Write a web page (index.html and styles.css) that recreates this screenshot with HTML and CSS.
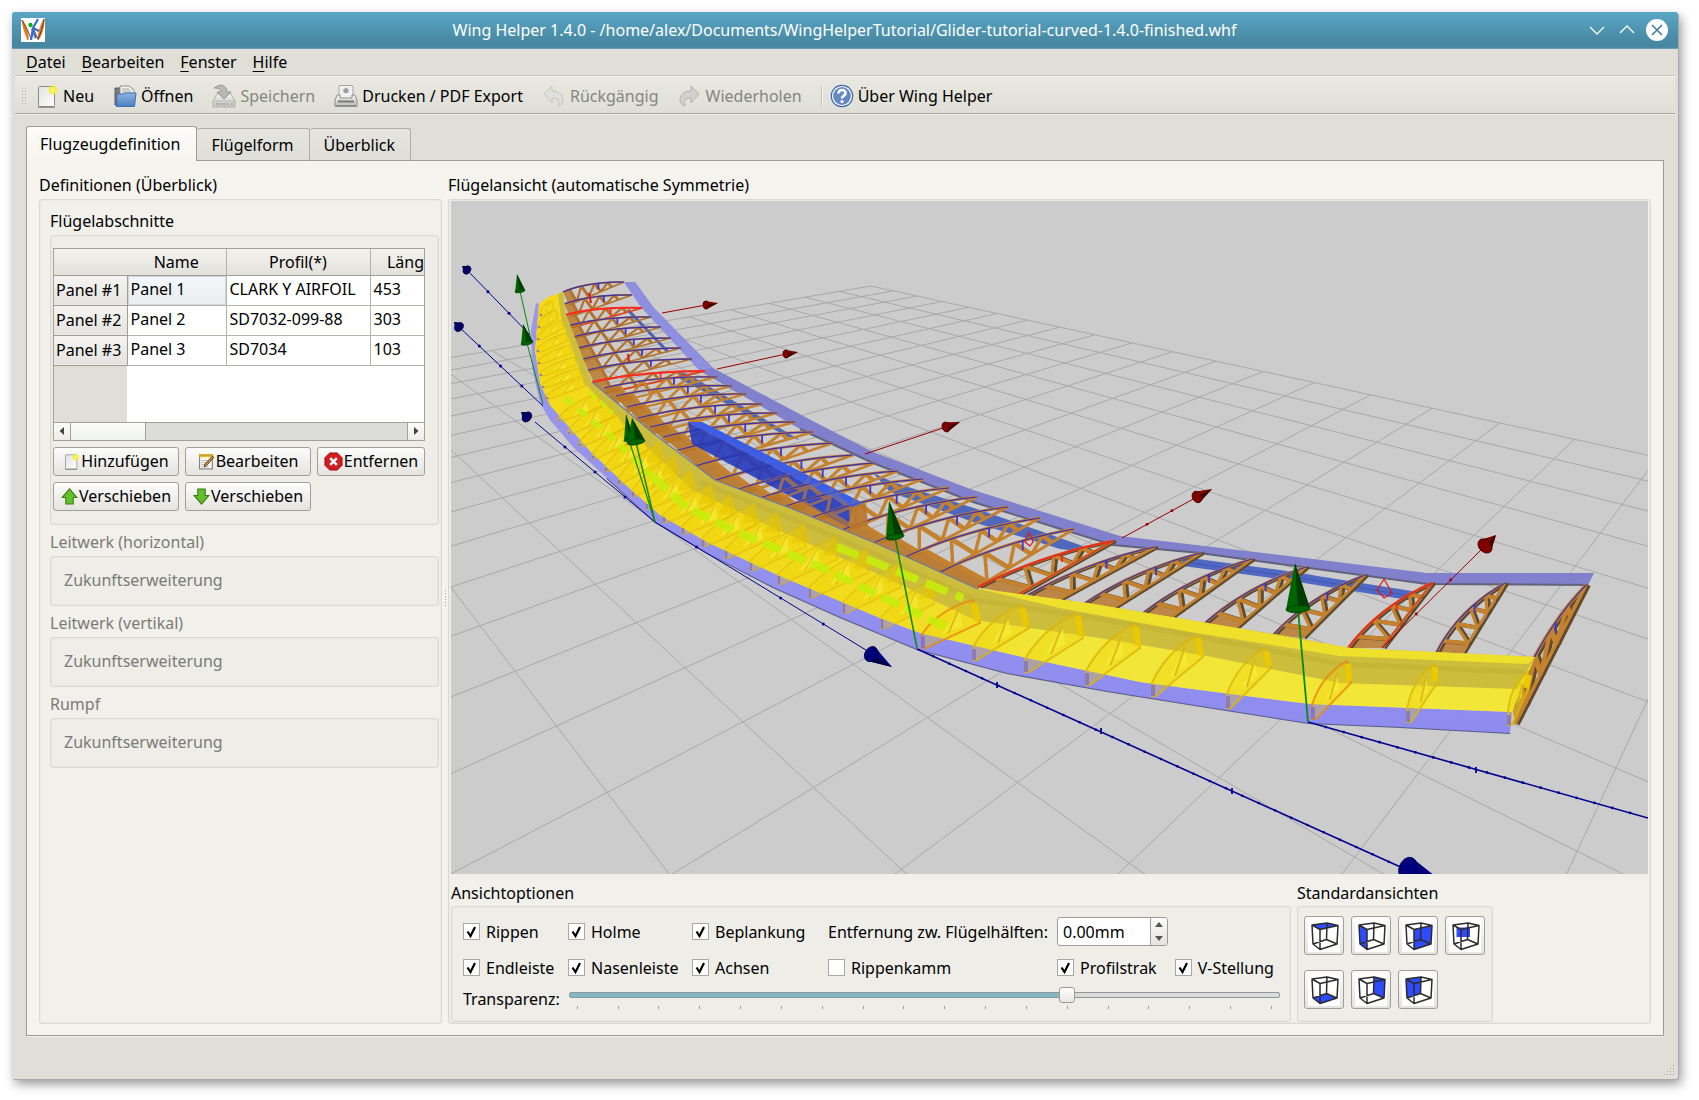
FILE: index.html
```html
<!DOCTYPE html>
<html lang="de">
<head>
<meta charset="utf-8">
<title>Wing Helper 1.4.0</title>
<link rel="stylesheet" href="styles.css">
</head>
<body>
<svg class="defs" aria-hidden="true">
  <defs>
    <linearGradient id="paper" x1="0" y1="0" x2="1" y2="1"><stop offset="0" stop-color="#e2e2e0"/><stop offset="1" stop-color="#fdfdfd"/></linearGradient>
    <linearGradient id="folder" x1="0" y1="0" x2="0" y2="1"><stop offset="0" stop-color="#8fb5e0"/><stop offset="1" stop-color="#4a80c4"/></linearGradient>
    <linearGradient id="metal" x1="0" y1="0" x2="0" y2="1"><stop offset="0" stop-color="#f6f6f5"/><stop offset="1" stop-color="#b9bab7"/></linearGradient>
    <radialGradient id="glow"><stop offset="0" stop-color="#fffb9a"/><stop offset=".5" stop-color="#f6ee2c"/><stop offset="1" stop-color="#f6ee2c" stop-opacity="0"/></radialGradient>
    <symbol id="i-new" viewBox="0 0 24 24"><rect x="3.500" y="2.500" width="16" height="20" rx="1" fill="url(#paper)" stroke="#8a8b87"/><path d="M3 23.200h17" stroke="#777" stroke-width="1"/><circle cx="18" cy="6" r="5.500" fill="url(#glow)"/></symbol>
    <symbol id="i-open" viewBox="0 0 24 24"><path d="M2 4h5l1 2v15H2z" fill="#77797a" stroke="#5c5e60"/><path d="M7 2h9l5 4v8H7z" fill="#f0f0ee" stroke="#8f918e"/><path d="M9 5h7M9 7h9M9 9h9" stroke="#aaa"/><path d="M4 10h7l1-1h11l-1.500 13.500h-18z" fill="url(#folder)" stroke="#3f6fae"/></symbol>
    <symbol id="i-save" viewBox="0 0 24 24"><path d="M5 10h14l4 7v6H1v-6z" fill="url(#metal)" stroke="#9c9d9a"/><path d="M1 17h22" stroke="#aaa"/><path d="M4 20h13M19 20h2" stroke="#888" stroke-width="2" stroke-dasharray="1.500 1"/><path d="M2 4C8-1 15 1 15 8h4l-7 7-7-7h4C9 5 6 4 2 4z" fill="#a5a7a4" stroke="#777976"/></symbol>
    <symbol id="i-print" viewBox="0 0 24 24"><rect x="5" y="1.500" width="14" height="14" rx="1" fill="#f0f0ee" stroke="#a3a5a2"/><path d="M12 3.500l3 2.500-1 3h-4L9 6z" fill="#9c9fa0"/><path d="M3 11h3v3h12v-3h3l2 5v6.500H1V16z" fill="url(#metal)" stroke="#8d8f8c"/><path d="M4 16.500h16v2H4z" fill="#777976"/><path d="M2 21.500h20" stroke="#8d8f8c"/></symbol>
    <symbol id="i-undo" viewBox="0 0 24 24"><path d="M10 2v5c8 0 11 5 11 9 0 3-2 5-5 6 2-5 0-8-6-8v5L2 10z" fill="#dddedb" stroke="#b9bab7"/></symbol>
    <symbol id="i-redo" viewBox="0 0 24 24"><path d="M13 2l8 8-8 9v-5c-5 0-8 3-6 8-3-1-5-3-5-6 0-4 3-9 11-9z" fill="#c9cac7" stroke="#9c9d9a"/></symbol>
    <symbol id="i-about" viewBox="0 0 24 24"><circle cx="12" cy="12" r="11.300" fill="#3f66a8"/><circle cx="12" cy="12" r="9.500" fill="#6489c2" stroke="#fff" stroke-width="1.200"/><path d="M8.500 9.500c0-5 7.500-4.500 7 0-.3 2.500-3.500 2-3.500 5" fill="none" stroke="#fff" stroke-width="2.600"/><circle cx="12" cy="17.500" r="1.600" fill="#fff"/></symbol>
    <symbol id="i-edit" viewBox="0 0 16 16"><rect x="1.500" y="2" width="12" height="13" fill="#fafaf6" stroke="#777"/><path d="M1 2.500h13" stroke="#d8a800" stroke-width="3" stroke-dasharray="1.500 .5"/><path d="M3 7h7M3 9h6M3 11h5M3 13h7" stroke="#aaa" stroke-width=".8"/><path d="M15 4l-7 8-2 1 .5-2.500 7-7.500z" fill="#c98a3c" stroke="#4e3510" stroke-width=".8"/></symbol>
    <symbol id="i-remove" viewBox="0 0 20 20"><path d="M6 1h8l5 5v8l-5 5H6l-5-5V6z" fill="#d01c22" stroke="#a00a10"/><path d="M6.500 6.500l7 7M13.500 6.500l-7 7" stroke="#fff" stroke-width="2.600"/></symbol>
    <symbol id="i-up" viewBox="0 0 16 16"><path d="M8 .8L15 9h-3.500v6h-7V9H1z" fill="#63bf2b" stroke="#3a7a10"/></symbol>
    <symbol id="i-down" viewBox="0 0 16 16"><path d="M8 15.200L1 7h3.500V1h7v6H15z" fill="#63bf2b" stroke="#3a7a10"/></symbol>
    <symbol id="cube" viewBox="0 0 32 32"><path d="M4 5L19 3L30 5.500L12 9.500ZM4 5L5 24L12 29.500L29 24L30 5.500M12 9.500V29.500M19 3L18.500 19.500M5 24L18.500 19.500L29 24" fill="none" stroke="#2b2b2b" stroke-width="1.500" stroke-linejoin="round"/></symbol>
  </defs>
</svg>

<div class="window">
  <header class="titlebar">
    <svg class="app-logo" viewBox="0 0 24 24"><path fill="#fff" d="M0 0h24v24H0z"/><path d="M1 2c1 7 3 14 6 20 1-7-2-14-6-20zM23 1c0 8-2 16-6 21 0-5 2-14 6-21z" fill="#e8781c" stroke="#e8781c"/><path d="M1 2c4 6 7 13 9 19l3-9 4 9C20 15 22 8 23 1" fill="none" stroke="#3b3530" stroke-width=".8"/><path d="M17 1l-5 9 6 3M12 10l-2 12M11 11l4 9" fill="none" stroke="#3a6cc8" stroke-width="2.200"/><circle cx="9.500" cy="7" r="2.200" fill="#10b010"/></svg>
    <h1>Wing Helper 1.4.0 - /home/alex/Documents/WingHelperTutorial/Glider-tutorial-curved-1.4.0-finished.whf</h1>
    <div class="win-buttons">
      <button aria-label="Minimieren"><svg viewBox="0 0 22 22"><path d="M4 8l7 7 7-7"/></svg></button>
      <button aria-label="Maximieren"><svg viewBox="0 0 22 22"><path d="M4 14l7-7 7 7"/></svg></button>
      <button aria-label="Schließen"><svg viewBox="0 0 22 22"><circle cx="11" cy="11" r="11"/><path class="cross" d="M6 6l10 10M16 6L6 16"/></svg></button>
    </div>
  </header>

  <nav class="menubar">
    <button><u>D</u>atei</button><button><u>B</u>earbeiten</button><button><u>F</u>enster</button><button><u>H</u>ilfe</button>
  </nav>

  <div class="toolbar">
    <span class="grip"></span>
    <button><svg><use href="#i-new"/></svg>Neu</button>
    <button><svg><use href="#i-open"/></svg>Öffnen</button>
    <button disabled><svg><use href="#i-save"/></svg>Speichern</button>
    <button><svg><use href="#i-print"/></svg>Drucken / PDF Export</button>
    <button disabled><svg><use href="#i-undo"/></svg>Rückgängig</button>
    <button disabled><svg><use href="#i-redo"/></svg>Wiederholen</button>
    <span class="separator"></span>
    <button><svg><use href="#i-about"/></svg>Über Wing Helper</button>
  </div>

  <main class="content">
    <div class="tabs" role="tablist">
      <button role="tab" class="active">Flugzeugdefinition</button>
      <button role="tab">Flügelform</button>
      <button role="tab">Überblick</button>
    </div>
    <div class="page">
      <section class="column sidebar">
        <h2>Definitionen (Überblick)</h2>
        <div class="frame side-frame">
          <h3>Flügelabschnitte</h3>
          <div class="frame sections">
            <div class="grid">
              <table>
                <colgroup><col class="c-head"><col class="c-name"><col class="c-profile"><col class="c-length"></colgroup>
                <thead><tr><td></td><th>Name</th><th>Profil(*)</th><th class="cut">Läng</th></tr></thead>
                <tbody>
                  <tr><th>Panel #1</th><td class="current">Panel 1</td><td>CLARK Y AIRFOIL</td><td>453</td></tr>
                  <tr><th>Panel #2</th><td>Panel 2</td><td>SD7032-099-88</td><td>303</td></tr>
                  <tr><th>Panel #3</th><td>Panel 3</td><td>SD7034</td><td>103</td></tr>
                </tbody>
              </table>
              <div class="grid-rest"></div>
              <div class="scrollbar">
                <button aria-label="Nach links"><svg viewBox="0 0 8 8"><path d="M6 0v8L1.500 4z"/></svg></button>
                <span class="thumb"></span>
                <button class="end" aria-label="Nach rechts"><svg viewBox="0 0 8 8"><path d="M2 0v8l4.500-4z"/></svg></button>
              </div>
            </div>
            <div class="actions">
              <button><svg><use href="#i-new"/></svg>Hinzufügen</button>
              <button><svg><use href="#i-edit"/></svg>Bearbeiten</button>
              <button><svg class="big"><use href="#i-remove"/></svg>Entfernen</button>
              <button><svg><use href="#i-up"/></svg>Verschieben</button>
              <button><svg><use href="#i-down"/></svg>Verschieben</button>
            </div>
          </div>
          <h3 class="off">Leitwerk (horizontal)</h3>
          <div class="frame future">Zukunftserweiterung</div>
          <h3 class="off">Leitwerk (vertikal)</h3>
          <div class="frame future">Zukunftserweiterung</div>
          <h3 class="off">Rumpf</h3>
          <div class="frame future">Zukunftserweiterung</div>
        </div>
      </section>
      <div class="splitter"><span></span></div>
      <section class="column viewer">
        <h2>Flügelansicht (automatische Symmetrie)</h2>
        <div class="frame view-frame">
          <svg id="scene" class="scene" viewBox="451 201 1197 673" preserveAspectRatio="xMidYMid slice" role="img" aria-label="3D-Ansicht des Flügels"></svg>
          <div class="below">
            <div class="options">
              <h3>Ansichtoptionen</h3>
              <div class="frame options-frame">
                <div class="checks">
                  <label><input type="checkbox" checked>Rippen</label>
                  <label><input type="checkbox" checked>Holme</label>
                  <label><input type="checkbox" checked>Beplankung</label>
                  <label for="distance">Entfernung zw. Flügelhälften:</label>
                  <div class="spin"><input id="distance" type="text" value="0.00mm"><div class="spin-buttons"><button aria-label="Mehr"><svg viewBox="0 0 8 5"><path d="M4 0l4 5H0z"/></svg></button><button aria-label="Weniger"><svg viewBox="0 0 8 5"><path d="M0 0h8L4 5z"/></svg></button></div></div>
                  <label class="row-start"><input type="checkbox" checked>Endleiste</label>
                  <label><input type="checkbox" checked>Nasenleiste</label>
                  <label><input type="checkbox" checked>Achsen</label>
                  <label><input type="checkbox">Rippenkamm</label>
                  <label><input type="checkbox" checked>Profilstrak</label>
                  <label><input type="checkbox" checked>V-Stellung</label>
                </div>
                <div class="slider-row">
                  <label for="alpha">Transparenz:</label>
                  <div class="slider">
                    <input id="alpha" type="range" min="0" max="170" value="120">
                    <div class="ticks"><i></i><i></i><i></i><i></i><i></i><i></i><i></i><i></i><i></i><i></i><i></i><i></i><i></i><i></i><i></i><i></i><i></i><i></i></div>
                  </div>
                </div>
              </div>
            </div>
            <div class="standard">
              <h3>Standardansichten</h3>
              <div class="frame standard-frame">
                <button aria-label="Oben"><svg viewBox="0 0 32 32"><path d="M4 5L19 3L30 5.500L12 9.500Z"/><use href="#cube"/></svg></button>
                <button aria-label="Links"><svg viewBox="0 0 32 32"><path d="M4 5L12 9.500V29.500L5 24Z"/><use href="#cube"/></svg></button>
                <button aria-label="Vorne"><svg viewBox="0 0 32 32"><path d="M12 9.500L30 5.500L29 24L12 29.500Z"/><use href="#cube"/></svg></button>
                <button aria-label="Perspektive"><svg viewBox="0 0 32 32"><path d="M7.500 7.500H21V17H7.500Z"/><use href="#cube"/></svg></button>
                <button aria-label="Unten"><svg viewBox="0 0 32 32"><path d="M5 24L18.500 19.500L29 24L12 29.500Z"/><use href="#cube"/></svg></button>
                <button aria-label="Rechts"><svg viewBox="0 0 32 32"><path d="M19 3L30 5.500L29 24L18.500 19.500Z"/><use href="#cube"/></svg></button>
                <button aria-label="Hinten"><svg viewBox="0 0 32 32"><path d="M4 5L19 3L18.500 19.500L5 24Z"/><use href="#cube"/></svg></button>
              </div>
            </div>
          </div>
        </div>
      </section>
    </div>
  </main>
  <footer class="statusbar"><span class="sizegrip"></span></footer>
</div>
<script src="scene.js"></script>
</body>
</html>
```
FILE: styles.css
```css
* { box-sizing: border-box; }

body {
  margin: 0;
  min-height: 100vh;
  padding: 12px 21px 21px 12px;
  display: flex;
  background: #fff;
  color: #000;
  font: 16px/22px "Noto Sans", sans-serif;
}

.defs { position: absolute; width: 0; height: 0; }

h1, h2, h3 { margin: 0; font-size: 16px; font-weight: 400; line-height: 22px; }
button, input { font: inherit; color: inherit; }
button { padding: 0; border: 0; background: none; }
svg { display: block; }

.window {
  flex: 1;
  min-width: 0;
  display: flex;
  flex-direction: column;
  background: #dfdfd8;
  border-radius: 3px 3px 2px 2px;
  box-shadow: 1px 1px 0 #a9a9a9, 3px 5px 11px rgba(0, 0, 0, .42);
}

/* title bar */
.titlebar {
  display: flex;
  align-items: center;
  height: 37px;
  padding: 0 10px 0 9px;
  border-radius: 3px 3px 0 0;
  border-bottom: 1px solid #6c9fb4;
  background: linear-gradient(#59a7c5, #4787a1 85%);
  color: #fff;
}
.app-logo { width: 24px; height: 24px; }
.titlebar h1 { flex: 1; padding-left: 58px; text-align: center; }
.win-buttons { display: flex; gap: 8px; }
.win-buttons svg { width: 22px; height: 22px; fill: none; stroke: #fff; stroke-width: 1.300; }
.win-buttons circle { fill: #fff; stroke: none; }
.win-buttons .cross { stroke: #3f7f9b; stroke-width: 1.600; }

/* menus and tools */
.menubar { display: flex; gap: 16px; height: 26px; padding: 2px 14px; }
.menubar u { text-underline-offset: 3px; }
.toolbar {
  display: flex;
  align-items: center;
  gap: 19px;
  height: 39px;
  margin: 0 3px;
  border-top: 1px solid #c4c4bf;
  border-bottom: 1px solid #a6a69f;
  background: linear-gradient(#e9e8e1, #dfdfd8);
  box-shadow: inset 0 1px #f2f2ee, 0 1px #eeeeea;
  padding: 2px 0 0 6px;
}
.toolbar button { display: flex; align-items: center; gap: 4px; white-space: nowrap; }
.toolbar button svg { width: 24px; height: 24px; }
.toolbar button:disabled { color: #868680; }
.toolbar button:disabled svg { opacity: .7; }
.grip { width: 5px; height: 18px; margin-right: -10px; background: radial-gradient(circle, #aaa 1px, transparent 1px) 0 0 / 3px 3px; }
.separator { width: 2px; height: 20px; margin-right: -12px; background: #c4c4bf; border-right: 1px solid #f4f4f0; }

/* tabs */
.content { flex: 1; display: flex; flex-direction: column; padding: 12px 14px 0; }
.tabs { position: relative; z-index: 1; display: flex; align-items: flex-end; height: 35px; }
.tabs button {
  height: 33px;
  padding: 0 15px 0 14px;
  border: 1px solid #aeaea8;
  border-left: 0;
  border-bottom-color: #9c9c96;
  border-radius: 3px 3px 0 0;
  background: linear-gradient(#e5e4df, #dfded9);
}
.tabs .active {
  height: 35px;
  padding: 0 16px 0 13px;
  border: 1px solid #9c9c96;
  border-bottom: 0;
  background: linear-gradient(#fdfcf9, #f5f4ef);
}
.page {
  flex: 1;
  display: flex;
  margin-top: -1px;
  padding: 13px 12px 11px;
  border: 1px solid #9c9c96;
  background: #f4f3ee;
  box-shadow: 0 1px #eeeeea;
}
.column { display: flex; flex-direction: column; }
.column h2 { margin-bottom: 3px; }

.frame {
  border: 1px solid #d9d8d3;
  border-radius: 3px;
  background: #f1f0eb;
  box-shadow: inset 0 0 2px #dedcd6;
}
.frame .frame { background: #eeede8; }

/* left column */
.sidebar { width: 403px; flex: none; }
.side-frame { flex: 1; padding: 10px 2px 10px 10px; }
.side-frame h3 { margin-bottom: 3px; }
.side-frame h3.off { margin: 6px 0 3px; }
.off, .future { color: #7b7b76; }
.frame.future { height: 50px; padding: 12px 13px; }
.sections { padding: 12px 13px 13px 2px; }

.grid { border: 1px solid #a2a29c; background: #fff; overflow: hidden; }
.grid table { width: 100%; table-layout: fixed; border-collapse: collapse; }
.c-head { width: 73px; }
.c-name { width: 99px; }
.c-profile { width: 144px; }
.grid th, .grid td {
  height: 30px;
  padding: 0 3px 2px;
  border: 1px solid #b4b4ae;
  border-left: 0;
  border-top: 0;
  font-weight: 400;
  text-align: left;
  white-space: nowrap;
}
.grid th { padding: 0 2px; background: linear-gradient(#f5f4f2, #e4e3df); border-color: #9f9f9a; }
.grid thead th, .grid thead td { height: 26px; text-align: center; background: linear-gradient(#f3f2ee, #e2e1dc); border-color: #9f9f9a #b4b4ae; }
.grid thead td { border-right: 0; }
.grid thead .cut { padding: 0; text-align: right; }
.grid tr > :last-child { border-right: 0; }
.grid .current { background: linear-gradient(#f5f8fb, #e9edf0); box-shadow: inset 0 0 0 1px #cfd6da; }
.grid-rest { height: 56px; background: linear-gradient(to right, #dfdfd8 73px, #fff 73px); }
.scrollbar { display: flex; height: 18px; border-top: 1px solid #a2a29c; background: #dcdcd8; }
.scrollbar button { display: flex; align-items: center; justify-content: center; width: 17px; border-right: 1px solid #a2a29c; background: linear-gradient(#fbfbf9, #eeede9); }
.scrollbar .end { margin-left: auto; border-right: 0; border-left: 1px solid #a2a29c; }
.scrollbar svg { width: 8px; height: 8px; fill: #444; }
.thumb { width: 75px; border-right: 1px solid #a2a29c; background: linear-gradient(#fcfdfb, #f0f2ee); }

.actions { display: grid; grid-template-columns: 126px 126px 1fr; gap: 6px; margin-top: 6px; }
.actions button, .standard button {
  display: flex;
  align-items: center;
  justify-content: center;
  border: 1px solid #a09f99;
  border-radius: 3px;
  background: linear-gradient(#fcfcfb, #e4e3df);
}
.actions button { height: 29px; }
.actions svg { width: 17px; height: 17px; margin-right: 1px; }
.actions .big { width: 19px; height: 19px; }

/* right column */
.splitter { width: 6px; display: flex; align-items: center; }
.splitter span { width: 1px; height: 18px; margin: 0 auto; background: repeating-linear-gradient(#aaa 0 1px, transparent 1px 3px); }
.viewer { flex: 1; min-width: 0; }
.view-frame { flex: 1; display: flex; flex-direction: column; padding: 1px 2px; }
.scene { flex: 1 1 300px; width: 100%; min-height: 300px; background: #ccc; }
.below { display: flex; gap: 6px; }
.options { flex: 0 1 840px; }
.below h3 { margin: 8px 0 2px; }
.options-frame, .standard-frame { height: 116px; }
.options-frame { padding: 10px 10px 0 11px; }
.checks {
  display: grid;
  grid-template-columns: 105px 124px 136px 229px auto auto;
  grid-auto-rows: 29px;
  row-gap: 7px;
  align-items: center;
  justify-content: start;
}
.row-start { grid-column-start: 1; }
.checks label { display: flex; align-items: center; gap: 6px; white-space: nowrap; }
.checks label:last-child { margin-left: 18px; }
input[type="checkbox"] {
  appearance: none;
  flex: none;
  width: 17px;
  height: 17px;
  margin: 0;
  border: 1px solid #a9a9a3;
  background: #fff;
}
input[type="checkbox"]:checked {
  background: #fff url("data:image/svg+xml,%3Csvg xmlns='http://www.w3.org/2000/svg' viewBox='0 0 15 15'%3E%3Cpath d='M3.500 7.500L6.500 12L11 3' fill='none' stroke='%23000' stroke-width='2.200'/%3E%3C/svg%3E") center / 15px 15px;
}
.spin { display: flex; width: 111px; height: 29px; border: 1px solid #9c9c96; border-radius: 3px; background: #fff; overflow: hidden; grid-column: 5 / 7; }
.spin input { flex: 1; min-width: 0; padding: 0 5px; border: 0; background: none; }
.spin-buttons { display: flex; flex-direction: column; width: 17px; border-left: 1px solid #9c9c96; background: linear-gradient(#fcfcfb, #e4e3df); }
.spin-buttons button { flex: 1; display: flex; align-items: center; justify-content: center; }
.spin-buttons svg { width: 8px; height: 5px; fill: #555; }

.slider-row { display: flex; gap: 9px; margin-top: 6px; }
.slider { flex: 1; }
.slider input {
  appearance: none;
  display: block;
  width: 100%;
  height: 6px;
  margin: 4px 0 8px;
  border: 1px solid #8a9a9c;
  border-radius: 2px;
  background: linear-gradient(to right, #86b7c4 70%, #dcdbd6 70%);
}
.slider input::-webkit-slider-thumb {
  appearance: none;
  width: 16px;
  height: 16px;
  border: 1px solid #9c9c96;
  border-radius: 3px;
  background: linear-gradient(#fff, #e8e7e3);
}
.ticks { display: flex; justify-content: space-between; padding: 0 8px; }
.ticks i { width: 1px; height: 3px; background: #9b9b95; }

.standard-frame { display: grid; grid-template-columns: repeat(4, 40px); grid-auto-rows: 39px; gap: 15px 7px; padding: 9px 7px 0 6px; }
.standard-frame svg { width: 32px; height: 32px; background: #fff; fill: #2f4bff; }

.statusbar { display: flex; justify-content: flex-end; align-items: flex-end; height: 43px; padding: 4px; }
.sizegrip { width: 11px; height: 11px; background: radial-gradient(circle, #a5a59f 1px, transparent 1px) 0 0 / 3px 3px; clip-path: polygon(100% 0, 100% 100%, 0 100%); }
```
FILE: scene.js
```js
// Builds the 3D preview of the wing as SVG shapes.
(function () {
  var out = [];
  var r = function (n) { return Math.round(n * 10) / 10; };
  function pts(a) { return a.map(function (p) { return r(p[0]) + ',' + r(p[1]); }).join(' '); }
  function poly(a, fill, extra) { out.push('<polygon points="' + pts(a) + '" fill="' + fill + '" ' + (extra || '') + '/>'); }
  function line(a, color, w, extra) { out.push('<polyline points="' + pts(a) + '" fill="none" stroke="' + color + '" stroke-width="' + w + '" ' + (extra || '') + '/>'); }
  function mix(a, b, t) { return [a[0] + (b[0] - a[0]) * t, a[1] + (b[1] - a[1]) * t]; }

  // ground grid, projected with a fixed camera
  function project(i, j) {
    var w = 1 - 0.02794 * i - 0.02942 * j;
    return [(870.9 - 2.6 * i - 56.6 * j) / w, (286 - 3.257 * i - 3.14 * j) / w];
  }
  for (var k = 0; k <= 30; k++) {
    line([project(k, 0), project(k, Math.min(32, (0.97 - 0.02794 * k) / 0.02942))], '#a9a9a9', 1);
    line([project(0, k), project(Math.min(32, (0.97 - 0.02942 * k) / 0.02794), k)], '#a9a9a9', 1);
  }

  // spanwise curves, far tip to near tip
  var noseLow = [[536,303],[531,330],[532,367],[540,403],[550,420],[573,447],[607,478],[655,522],[707,553],[773,587],[840,617],[917,649],[1007,673],[1107,691],[1207,707],[1308,723],[1400,727],[1510,733]];
  var noseTop = [[539,304],[535,350],[540,383],[550,405],[590,451],[627,486],[660,515],[707,542],[773,573],[880,618],[920,633],[1027,658],[1140,682],[1200,690],[1310,704],[1512,712]];
  var sheetRear = [[563,292],[566,315],[592,382],[653,433],[715,480],[790,508],[880,545],[978,589],[1087,603],[1207,623],[1280,635],[1350,648],[1535,657]];
  var bandLow = [[558,294],[561,317],[585,384],[640,440],[692,490],[773,528],[880,575],[975,620],[1093,637],[1207,656],[1340,683],[1517,689]];
  var tailRear = [[635,282],[653,307],[713,368],[807,418],[873,452],[973,490],[1120,536],[1280,555],[1427,573],[1594,573]];
  var tailFront = [[624,282],[641,307],[700,371],[800,429],[873,463],[973,502],[1113,545],[1200,553],[1280,564],[1427,584],[1588,585]];
  function band(a, b) { return a.concat(b.slice().reverse()); }

  poly(band(tailFront, tailRear), '#8080cc');
  poly([[624,282],[635,282],[653,307],[713,368],[700,371],[641,307]], '#8f8fe0');
  line(tailFront.slice(3), '#62627c', 2);

  // rear spar
  line([[628,310],[668,352]], '#4a62b8', 3);
  poly([[680,372],[688,374],[800,440],[788,437],[680,379]], '#4d68b4');
  poly([[873,473],[893,482],[983,511],[1080,545],[1094,553],[1060,549],[973,522],[890,492]], '#5068bc');
  poly([[1183,557],[1280,570],[1418,592],[1408,600],[1280,579],[1183,566]], '#5068c4');
  line([[1183,562],[1280,575],[1412,596]], '#4058b0', 1);

  function rib(f, g, t, o) {
    var c = [(f[0] + t[0]) / 2 - (o.bx || 2), (f[1] + t[1]) / 2 - (o.by || 9)];
    function top(s) { return mix(mix(f, c, s), mix(c, t, s), s); }
    function bot(s) { return mix(g, t, s); }
    var arch = [], s;
    for (s = 0; s <= 1.01; s += 0.1) arch.push(top(s));
    var w = o.w;
    // solid web behind the front spar
    poly([f, top(0.14), bot(0.14), g], '#b87626', 'opacity="' + (o.web || 0.8) + '"');
    function frame(dx, dy, color) {
      function sh(a) { return a.map(function (p) { return [p[0] + dx, p[1] + dy]; }); }
      line(sh(arch), color, w);
      line(sh([g, t]), color, w);
      var st = [0.14, 0.36, 0.58, 0.78];
      for (var n = 0; n < st.length; n++) {
        line(sh([top(st[n]), bot(st[n])]), color, w * 1.6);
        if (n < 3) line(sh([bot(st[n]), top(st[n + 1])]), color, w * 1.2);
      }
    }
    if (o.thick) frame(o.thick, 0.5, '#5e4a2e');
    frame(0, 0, o.wood || '#c4822f');
    line(arch, o.color || '#3a30b4', o.red ? 2 : 1.2);
    if (o.red) line([g, t], o.color, 1.2);
    line([top(0.64), [top(0.64)[0], top(0.64)[1] + w * 3.2]], o.color || '#3a34d0', 1.8);
  }

  // far half, outer panels
  [[[563,292],[624,282]],[[564,304],[632,295]],[[565,315],[642,308],1],[[568,326],[651,317]],[[573,337],[661,327]],[[578,348],[671,338]],[[583,359],[681,348]],[[588,370],[692,359]],[[592,382],[705,371],1]].forEach(function (a) {
    rib(a[0], [a[0][0] + 6, a[0][1] + 13], a[1], { w: 1.8, by: 5, bx: 8, wood: '#b0722c', red: a[2], color: a[2] ? '#ff2a20' : null });
  });

  // centre panels
  var centre = [[604,388,717,377],[616,396,732,386],[627,407,746,394],[638,418,762,404],[650,427,777,413],[663,437,795,422],[678,450,813,432],[695,466,833,443],[716,480,853,455],[736,490,875,463],[760,498,898,471],[783,507,923,479],[810,518,949,488],[842,530,977,497],[873,543,1008,507],[905,557,1040,518],[938,573,1074,529]];
  centre.forEach(function (a, n) {
    var near = n / 16;
    rib([a[0], a[1]], [a[0] + 10 + near * 25, a[1] + 15 + near * 2], [a[2], a[3]], { w: 2.2 + near * 0.8, by: 7 + near * 2, bx: 5, web: 0.9 });
    if (n === 8) {
      poly([[688,422],[853,508],[848,527],[692,444]], '#2438b8', 'opacity=".85"');
      poly([[688,422],[702,422],[863,503],[853,508]], '#3e5ee4');
    }
  });
  poly([[688,424],[853,508],[848,527],[692,444]], '#2038c8', 'opacity=".3"');
  poly([[688,422],[702,422],[863,503],[853,508]], '#3e5ee4', 'opacity=".75"');
  poly([[849,508],[866,503],[868,526],[850,529]], '#b8762a', 'opacity=".9"');

  // near panels
  [[978,587,1017,595,1113,541,1],[1028,595,1058,600,1155,547],[1085,603,1113,608,1201,553],[1143,613,1170,618,1252,559],[1205,623,1233,630,1306,567],[1273,635,1302,638,1365,575],[1348,648,1382,648,1432,583,1],[1436,653,1462,653,1505,583]].forEach(function (a, n) {
    rib([a[0], a[1]], [a[2], a[3]], [a[4], a[5]], { w: 2.6, thick: 3, by: 9, bx: 5 + n, red: a[6], color: a[6] ? '#e82a1c' : null });
  });
  rib([1512,706], [1515,724], [1586,585], { w: 3.5, thick: 3, by: 14, bx: 8 });

  // sheeting
  out.push('<defs><linearGradient id="sheet" x1="500" y1="0" x2="1500" y2="0" gradientUnits="userSpaceOnUse"><stop offset="0" stop-color="#f6da10"/><stop offset=".38" stop-color="#f3dc14"/><stop offset=".55" stop-color="#f3e830"/><stop offset="1" stop-color="#f4e82e"/></linearGradient><linearGradient id="nose" x1="0" y1="0" x2="0" y2="1"><stop offset="0" stop-color="#9a96ec"/><stop offset="1" stop-color="#8c8af0"/></linearGradient></defs>');
  line(noseLow.slice(6), '#5c5c86', 2);
  poly(band(noseLow, noseTop), 'url(#nose)', 'opacity=".97"');
  poly(noseTop.concat([[1535,657]], sheetRear.slice(0, -1).reverse(), [[548,297]]), 'url(#sheet)', 'opacity=".95"');
  poly(band(sheetRear, bandLow), '#ccbe3c');
  line([[700,482],[790,518],[880,556],[975,600],[1093,618],[1207,638],[1340,664],[1525,672]], '#bdae34', 5, 'opacity=".5"');
  poly([[975,588],[1087,603],[1207,623],[1350,648],[1535,657],[1528,664],[1340,656],[1190,632],[1060,608]], '#efe02c');
  line(sheetRear.slice(2, 8), '#6a78a8', 1.2);

  // front part of the ribs, seen through the sheeting
  function noseRib(t, b, l, h, o) {
    var d = 'M' + l[0] + ' ' + l[1] + 'Q' + r((l[0] + t[0]) / 2 - o.k) + ' ' + r((l[1] + t[1]) / 2 - o.k) + ' ' + t[0] + ' ' + t[1] + 'L' + b[0] + ' ' + b[1] + 'L' + (l[0] + 4) + ' ' + r(l[1] + h) + 'h-4Z';
    var op = o.post ? 0.8 : 0.5;
    out.push('<path d="' + d + '" fill="#f0d000" fill-opacity=".3" stroke="' + (o.c || '#dcb40a') + '" stroke-width="' + o.w + '" stroke-opacity="' + op + '"/>');
    line([[l[0] + 1, l[1] + 2], [l[0] + 1, l[1] + h]], '#7a68cc', o.post ? 4 : 2.5, 'opacity=".7"');
    var u = mix(l, t, 0.72), m = mix(mix(l, [l[0], l[1] + h], 0.6), b, 0.45);
    poly([u, mix(l, b, 0.7), mix(m, l, 0.25)], '#f6ec3c', 'opacity=".65"');
    line([m, u], '#d8b010', o.w, 'opacity="' + op + '"');
    if (o.post) line([[t[0] + 1, t[1] + 3], [b[0] - 2, b[1] - 2]], '#ecc800', 6);
  }
  [[552,301,540,312],[556,310,538,324],[562,320,537,336],[566,333,537,348],[570,345,538,360],[575,357,540,372],[579,368,542,384],[583,378,546,395]].forEach(function (a) {
    noseRib([a[0], a[1]], [a[0] + 2, a[1] + 8], [a[2], a[3]], 4, { k: 3, w: 1.3 });
  });
  var le = [[558,418],[568,430],[579,442],[592,454],[605,466],[618,478],[632,490],[646,502],[663,515],[682,526],[702,538],[725,549],[750,561],[778,574],[809,587],[843,602],[881,617]];
  le.forEach(function (l, n) {
    var c = centre[n], t = [r(l[0] + (c[0] - l[0]) * 0.85), r(l[1] + (c[1] - l[1]) * 0.8)];
    noseRib(t, [t[0] + 5, t[1] + 14 + n / 2], l, 3 + n * 0.55, { k: 5, w: 1.6 });
    if (n > 4) poly([[t[0] - 2, t[1]], [t[0] + 3, t[1] - 4], [t[0] + 9, t[1] + 16], [t[0] - 10, t[1] + 17]], '#e6c400', 'opacity=".55"');
  });
  [[973,600,980,623,922,634,14],[1021,605,1029,628,973,647,13],[1077,613,1083,638,1025,659,13],[1135,624,1140,648,1086,671,14],[1197,635,1203,657,1152,683,13],[1265,648,1271,668,1227,694,14],[1347,661,1351,683,1312,705,14],[1434,664,1437,683,1407,709,13],[1528,672,1528,690,1508,713,12]].forEach(function (a, n) {
    noseRib([a[0], a[1]], [a[2], a[3]], [a[4], a[5]], a[6], { k: 8, w: 2, post: true, c: n === 0 || n === 6 ? '#e88a10' : null });
  });

  // carbon tubes under the sheeting
  line([[565,398],[607,433],[627,453],[653,477]], '#c8ec0c', 6, 'stroke-dasharray="10 8" opacity=".85"');
  line([[653,477],[687,508],[740,533],[787,553],[827,570],[880,596],[947,627]], '#c8ec0c', 8, 'stroke-dasharray="19 7" opacity=".9"');
  line([[590,393],[613,413]], '#c8ec0c', 4, 'stroke-dasharray="8 5" opacity=".85"');
  line([[837,547],[963,598]], '#c8ec0c', 8, 'stroke-dasharray="23 9" opacity=".9"');

  // axes
  function ticks(a, b, n, color, s) {
    for (var q = 1; q < n; q++) {
      var p = mix(a, b, q / n);
      out.push('<circle cx="' + r(p[0]) + '" cy="' + r(p[1]) + '" r="' + s + '" fill="' + color + '"/>');
    }
  }
  function cone(base, tip, rad, color, dark) {
    var dx = tip[0] - base[0], dy = tip[1] - base[1], len = Math.hypot(dx, dy), nx = -dy / len * rad, ny = dx / len * rad;
    var ang = Math.atan2(dy, dx) * 180 / Math.PI;
    poly([[base[0] + nx, base[1] + ny], tip, [base[0] - nx, base[1] - ny]], color);
    poly([base, tip, [base[0] + nx, base[1] + ny]], dark);
    out.push('<ellipse cx="' + base[0] + '" cy="' + base[1] + '" rx="' + r(rad * (color === '#006400' ? 0.3 : 0.75)) + '" ry="' + rad + '" fill="' + color + '" stroke="' + dark + '" stroke-width=".8" transform="rotate(' + r(ang) + ' ' + base[0] + ' ' + base[1] + ')"/>');
  }
  var blue = '#000090', red = '#980000', green = '#0a8a0a';
  [[[467,270],[530,335],3],[[458,326],[543,406],4],[[535,422],[655,522],4],[[655,522],[738,572],2],[[738,572],[866,650],3]].forEach(function (a) {
    line([a[0], a[1]], blue, 1); ticks(a[0], a[1], a[2], blue, 1.5);
  });
  line([[917,649],[1405,869]], blue, 1.6); ticks([917,649], [1405,869], 30, blue, 1.3);
  line([[1308,722],[1648,818]], blue, 1.6); ticks([1308,722], [1648,818], 19, blue, 1.4);
  [[997,685],[1101,731],[1232,791],[1476,770]].forEach(function (p) { line([[p[0], p[1] - 3], [p[0], p[1] + 3]], blue, 1.8); });
  cone([467,270], [462,266], 4.5, '#00006c', '#000038');
  cone([459,327], [454,322], 5, '#00006c', '#000038');
  cone([527,417], [521,412], 5.5, '#00006c', '#000038');
  cone([871,654], [892,667], 8, '#00007c', '#000040');
  cone([1408,869], [1440,880], 12, '#00007c', '#000050');

  [[[662,313],[706,305],[718,303],4],[[717,369],[786,354],[798,352],4],[[865,454],[946,427],[960,422],5],[[1122,538],[1197,497],[1212,489],6],[[1382,648],[1485,546],[1496,535],8]].forEach(function (a) {
    line([a[0], a[1]], red, 1);
    if (a[3] > 5) ticks(a[0], a[1], 3, red, 1.4);
    cone(a[1], a[2], a[3], '#7e0000', '#3c0000');
  });
  [[[531,340],[520,291],[517,274],5,1],[[543,404],[527,343],[523,324],6,1],[[655,522],[629,440],[626,414],5,1.2],[[655,522],[636,442],[632,418],9,1.4],[[917,648],[895,537],[889,501],9,1.5],[[1308,722],[1298,609],[1295,563],12,1.8]].forEach(function (a) {
    line([a[0], a[1]], green, a[4]);
    cone(a[1], a[2], a[3], '#006400', '#003c00');
  });

  // balance marks
  line([[1029,532],[1033,542],[1030,546],[1025,542],[1029,532]], '#e01818', 1.2);
  line([[1384,579],[1392,593],[1384,598],[1377,590],[1384,579]], '#e01818', 1.2);
  line([[589,293],[591,303]], '#e01818', 2);
  line([[628,354],[629,362]], '#e01818', 2);

  document.getElementById('scene').innerHTML = out.join('');
})();
```
